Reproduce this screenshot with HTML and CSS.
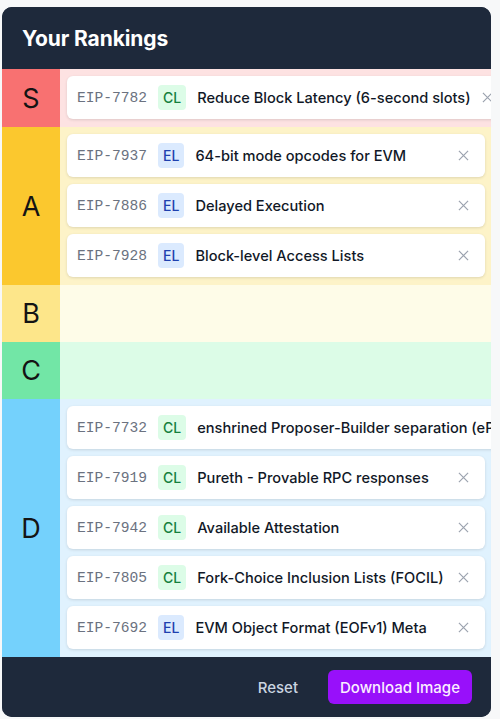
FILE: index.html
```html
<!DOCTYPE html>
<html>
<head>
<meta charset="utf-8">
<link rel="stylesheet" href="styles.css">
</head>
<body>
<div class="card">
  <div class="header"><h1 class="title">Your Rankings</h1></div>
  <div class="tiers">
    <div class="tier tier-s">
      <div class="label">S</div>
      <div class="items">
        <div class="item"><span class="eip">EIP-7782</span><span class="badge cl">CL</span><span class="name">Reduce Block Latency (6-second slots)</span><svg class="x" viewBox="0 0 12 12"><path d="M1 1L11 11M11 1L1 11"/></svg></div>
      </div>
    </div>
    <div class="tier tier-a">
      <div class="label">A</div>
      <div class="items">
        <div class="item"><span class="eip">EIP-7937</span><span class="badge el">EL</span><span class="name">64-bit mode opcodes for EVM</span><svg class="x" viewBox="0 0 12 12"><path d="M1 1L11 11M11 1L1 11"/></svg></div>
        <div class="item"><span class="eip">EIP-7886</span><span class="badge el">EL</span><span class="name">Delayed Execution</span><svg class="x" viewBox="0 0 12 12"><path d="M1 1L11 11M11 1L1 11"/></svg></div>
        <div class="item"><span class="eip">EIP-7928</span><span class="badge el">EL</span><span class="name">Block-level Access Lists</span><svg class="x" viewBox="0 0 12 12"><path d="M1 1L11 11M11 1L1 11"/></svg></div>
      </div>
    </div>
    <div class="tier tier-b">
      <div class="label">B</div>
      <div class="items"></div>
    </div>
    <div class="tier tier-c">
      <div class="label">C</div>
      <div class="items"></div>
    </div>
    <div class="tier tier-d">
      <div class="label">D</div>
      <div class="items">
        <div class="item"><span class="eip">EIP-7732</span><span class="badge cl">CL</span><span class="name">enshrined Proposer-Builder separation (ePBS)</span><svg class="x" viewBox="0 0 12 12"><path d="M1 1L11 11M11 1L1 11"/></svg></div>
        <div class="item"><span class="eip">EIP-7919</span><span class="badge cl">CL</span><span class="name">Pureth - Provable RPC responses</span><svg class="x" viewBox="0 0 12 12"><path d="M1 1L11 11M11 1L1 11"/></svg></div>
        <div class="item"><span class="eip">EIP-7942</span><span class="badge cl">CL</span><span class="name">Available Attestation</span><svg class="x" viewBox="0 0 12 12"><path d="M1 1L11 11M11 1L1 11"/></svg></div>
        <div class="item"><span class="eip">EIP-7805</span><span class="badge cl">CL</span><span class="name">Fork-Choice Inclusion Lists (FOCIL)</span><svg class="x" viewBox="0 0 12 12"><path d="M1 1L11 11M11 1L1 11"/></svg></div>
        <div class="item"><span class="eip">EIP-7692</span><span class="badge el">EL</span><span class="name">EVM Object Format (EOFv1) Meta</span><svg class="x" viewBox="0 0 12 12"><path d="M1 1L11 11M11 1L1 11"/></svg></div>
      </div>
    </div>
  </div>
  <div class="footer">
    <button class="btn-reset">Reset</button>
    <button class="btn-download">Download Image</button>
  </div>
</div>
</body>
</html>
```
FILE: styles.css
```css
* { box-sizing: border-box; }
html, body { margin: 0; padding: 0; }
body {
  background: #f7f8f9;
  font-family: Inter, "Noto Sans", sans-serif;
  height: 719px;
  overflow: hidden;
}
.card {
  margin: 7px 0 0 2px;
  width: 489px;
  height: 710px;
  border-radius: 10px;
  overflow: hidden;
  background: #1e293b;
  display: flex;
  flex-direction: column;
}
.header {
  height: 62px;
  display: flex;
  align-items: center;
  padding-left: 20px;
  background: #1e293b;
}
.title {
  margin: 0;
  color: #ffffff;
  font-size: 21px;
  font-weight: 700;
  letter-spacing: -0.1px;
}
.tiers { display: flex; flex-direction: column; }
.tier {
  display: grid;
  grid-template-columns: 58px 1fr;
  min-height: 57px;
}
.label {
  display: flex;
  align-items: center;
  justify-content: center;
  font-size: 27px;
  font-weight: 400;
  color: #141414;
}
.items {
  display: flex;
  flex-direction: column;
  gap: 7px;
  padding: 7px 6px 8px 7px;
  min-width: 0;
}
.tier-s .label { background: #f87171; }
.tier-s .items { background: #fde2e2; }
.tier-a .label { background: #fbc82e; }
.tier-a .items { background: #fdf3c8; }
.tier-b .label { background: #fde68a; }
.tier-b .items { background: #fefce8; }
.tier-c .label { background: #72e6a6; }
.tier-c .items { background: #dcfce7; }
.tier-d .label { background: #74d1fc; }
.tier-d .items { background: #e0f2fe; }
.item {
  height: 43px;
  flex-shrink: 0;
  min-width: max-content;
  background: #ffffff;
  border-radius: 6px;
  box-shadow: 0 1px 3px rgba(0,0,0,0.12);
  display: flex;
  align-items: center;
  gap: 11px;
  padding: 0 16px 0 10px;
}
.eip {
  font-family: "Liberation Mono", "DejaVu Sans Mono", monospace;
  font-size: 14.6px;
  color: #6b7280;
}
.badge {
  font-size: 14px;
  font-weight: 500;
  height: 25px;
  display: flex;
  align-items: center;
  padding: 0 5px;
  border-radius: 4px;
}
.badge.cl { background: #dcfce7; color: #15803d; }
.badge.el { background: #dbeafe; color: #1e40af; }
.name {
  font-size: 14.6px;
  font-weight: 500;
  color: #111827;
  margin-right: auto;
}
.x {
  width: 11px;
  height: 11px;
  stroke: #9ca3af;
  stroke-width: 1.3;
  fill: none;
  flex-shrink: 0;
}
.footer {
  flex: 1;
  background: #1e293b;
  display: flex;
  justify-content: flex-end;
  align-items: center;
  gap: 14px;
  padding-right: 19px;
}
.btn-reset {
  background: none;
  border: none;
  color: #cbd5e1;
  font-family: inherit;
  font-size: 15px;
  font-weight: 500;
  padding: 0 16px;
}
.btn-download {
  background: #9810fa;
  border: none;
  border-radius: 6px;
  color: #fbeeff;
  font-family: inherit;
  font-size: 15px;
  font-weight: 500;
  height: 34px;
  width: 144px;
  padding: 0;
}
```
